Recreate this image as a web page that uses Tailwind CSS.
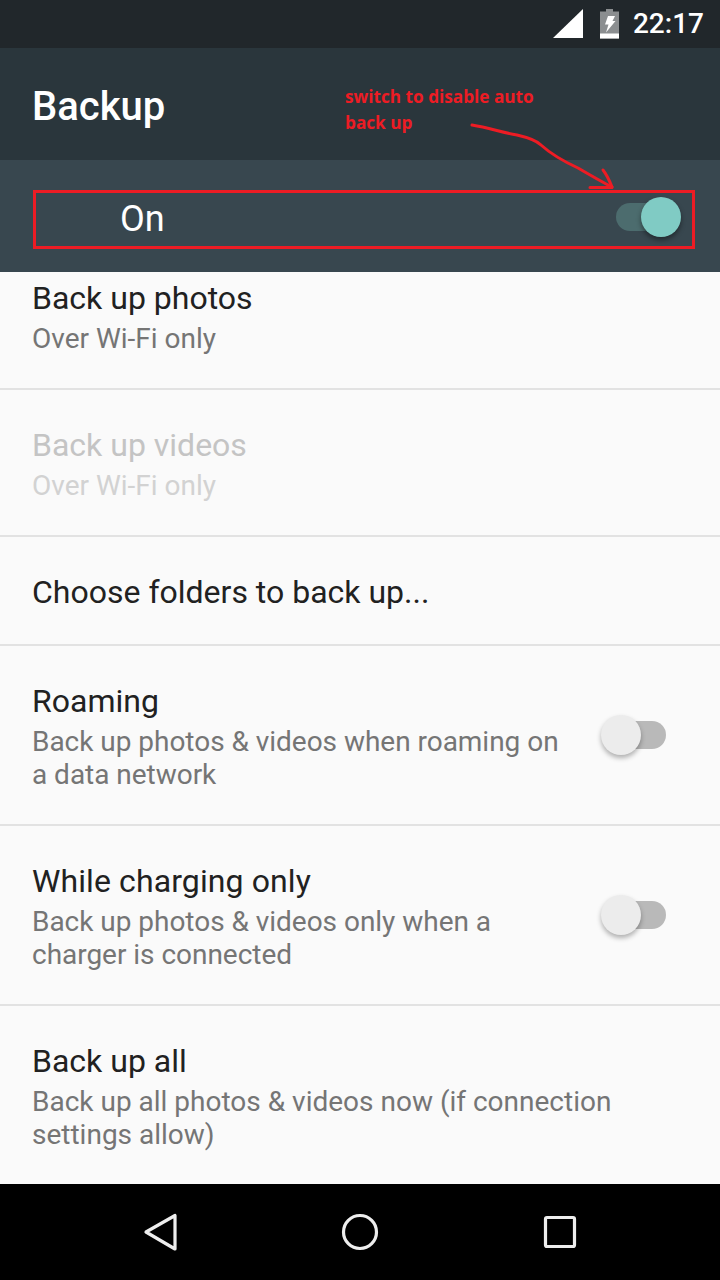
<!DOCTYPE html>
<html>
<head>
<meta charset="utf-8">
<script src="https://cdn.jsdelivr.net/npm/@tailwindcss/browser@4"></script>
</head>
<body class="m-0">
<div class="relative w-[720px] h-[1280px] overflow-hidden flex flex-col bg-[#fafafa] font-['Roboto',sans-serif]">
  <!-- status bar -->
  <div class="h-[48px] bg-[#21272b] flex items-center justify-end pr-[16px] shrink-0">
    <svg class="w-[30px] h-[30px] mr-[17px] mt-[-1px]" viewBox="0 0 30 30"><polygon points="0,29 30,0 30,29" fill="#fff"/></svg>
    <svg class="w-[19px] h-[30px] mr-[14px]" viewBox="0 0 19 30">
      <path d="M6 0h7v3h6v27H0V3h6z" fill="#8b8e90" transform="translate(0,-0.5)"/>
      <rect x="0" y="24.5" width="19" height="5" fill="#fff"/>
      <path d="M8 7 H15 L12.5 12 H15.5 L6 23.5 L8.5 15.5 H5 Z" fill="#fff"/>
    </svg>
    <span class="text-[28px] leading-[34px] text-white font-medium">22:17</span>
  </div>
  <!-- app bar -->
  <div class="h-[112px] bg-[#2a363c] flex items-center pl-[32px] shrink-0">
    <span class="text-[40px] leading-[48px] font-medium text-white mt-[5px]">Backup</span>
  </div>
  <!-- switch bar -->
  <div class="h-[112px] bg-[#38474f] shrink-0 flex items-center justify-between pl-[120px] pr-[40px]">
    <span class="text-[36px] leading-[40px] text-white mt-[5px]">On</span>
    <div class="relative w-[64px] h-[28px] rounded-full bg-[#4c6c6e] mt-[1px]">
      <div class="absolute right-[-1px] top-[-6px] w-[40px] h-[40px] rounded-full bg-[#80cbc4] shadow-[0_3px_5px_rgba(0,0,0,0.4)]"></div>
    </div>
  </div>
  <!-- list -->
  <div class="flex-1 flex flex-col">
    <div class="h-[118px] border-b-2 border-[#e2e2e2] pl-[32px] pr-[32px]">
      <div class="text-[32px] leading-[36px] text-[#212121] mt-[8px]">Back up photos</div>
      <div class="text-[28px] leading-[33px] text-[#757575] mt-[6px]">Over Wi-Fi only</div>
    </div>
    <div class="h-[147px] border-b-2 border-[#e2e2e2] pl-[32px] pr-[32px]">
      <div class="text-[32px] leading-[36px] text-[#c4c4c4] mt-[37px]">Back up videos</div>
      <div class="text-[28px] leading-[33px] text-[#d2d2d2] mt-[6px]">Over Wi-Fi only</div>
    </div>
    <div class="h-[109px] border-b-2 border-[#e2e2e2] pl-[32px] flex items-center">
      <div class="text-[32px] leading-[36px] text-[#212121] mt-[2px]">Choose folders to back up...</div>
    </div>
    <div class="h-[180px] border-b-2 border-[#e2e2e2] pl-[32px] pr-[54px] flex items-start justify-between">
      <div>
        <div class="text-[32px] leading-[36px] text-[#212121] mt-[37px]">Roaming</div>
        <div class="text-[28px] leading-[33px] text-[#757575] mt-[6px] w-[540px] tracking-[-0.03px]">Back up photos &amp; videos when roaming on a data network</div>
      </div>
      <div class="relative w-[64px] h-[28px] rounded-full bg-[#b9b9b9] mt-[75px] shrink-0">
        <div class="absolute left-[-1px] top-[-6px] w-[40px] h-[40px] rounded-full bg-[#ececec] shadow-[0_3px_5px_rgba(0,0,0,0.3)]"></div>
      </div>
    </div>
    <div class="h-[180px] border-b-2 border-[#e2e2e2] pl-[32px] pr-[54px] flex items-start justify-between">
      <div>
        <div class="text-[32px] leading-[36px] text-[#212121] mt-[37px] tracking-[0.1px]">While charging only</div>
        <div class="text-[28px] leading-[33px] text-[#757575] mt-[6px] w-[540px] tracking-[-0.03px]">Back up photos &amp; videos only when a charger is connected</div>
      </div>
      <div class="relative w-[64px] h-[28px] rounded-full bg-[#b9b9b9] mt-[75px] shrink-0">
        <div class="absolute left-[-1px] top-[-6px] w-[40px] h-[40px] rounded-full bg-[#ececec] shadow-[0_3px_5px_rgba(0,0,0,0.3)]"></div>
      </div>
    </div>
    <div class="flex-1 pl-[32px] pr-[32px]">
      <div class="text-[32px] leading-[36px] text-[#212121] mt-[37px]">Back up all</div>
      <div class="text-[28px] leading-[33px] text-[#757575] mt-[6px]">Back up all photos &amp; videos now (if connection settings allow)</div>
    </div>
  </div>
  <!-- nav bar -->
  <div class="h-[96px] bg-black shrink-0 flex items-center justify-center">
    <div class="flex items-center gap-[160px]">
      <svg class="w-[40px] h-[40px]" viewBox="0 0 40 40" fill="none" stroke="#eeeeee" stroke-width="3.2" stroke-linejoin="round"><path d="M6 20 L35 3.5 V37 Z"/></svg>
      <svg class="w-[40px] h-[40px]" viewBox="0 0 40 40" fill="none" stroke="#eeeeee" stroke-width="3.2"><circle cx="20" cy="20" r="16.5"/></svg>
      <svg class="w-[40px] h-[40px]" viewBox="0 0 40 40" fill="none" stroke="#eeeeee" stroke-width="3.2" stroke-linejoin="round"><rect x="5.5" y="5.5" width="29" height="29" rx="1.5"/></svg>
    </div>
  </div>
  <!-- annotation overlays -->
  <div class="absolute left-[33px] top-[190px] w-[662px] h-[59px] border-[3px] border-[#ed1c24]"></div>
  <div class="absolute left-[345px] top-[84px] text-[17.2px] leading-[26px] font-bold text-[#ed1c24] font-['Open_Sans',sans-serif] w-[210px]">switch to disable auto back up</div>
  <svg class="absolute left-0 top-0 w-[720px] h-[300px] pointer-events-none" viewBox="0 0 720 300" fill="none" stroke="#ed1c24" stroke-width="3" stroke-linecap="round" stroke-linejoin="round">
    <path d="M472 125 C490 128 500 132 517 135 C530 138 538 142 541 145 C552 155 565 162 578 168 C590 175 602 182 612 187"/>
    <path d="M603 170 C607 175 610 182 612 187 M590 187.5 H612"/>
  </svg>
</div>
</body>
</html>
